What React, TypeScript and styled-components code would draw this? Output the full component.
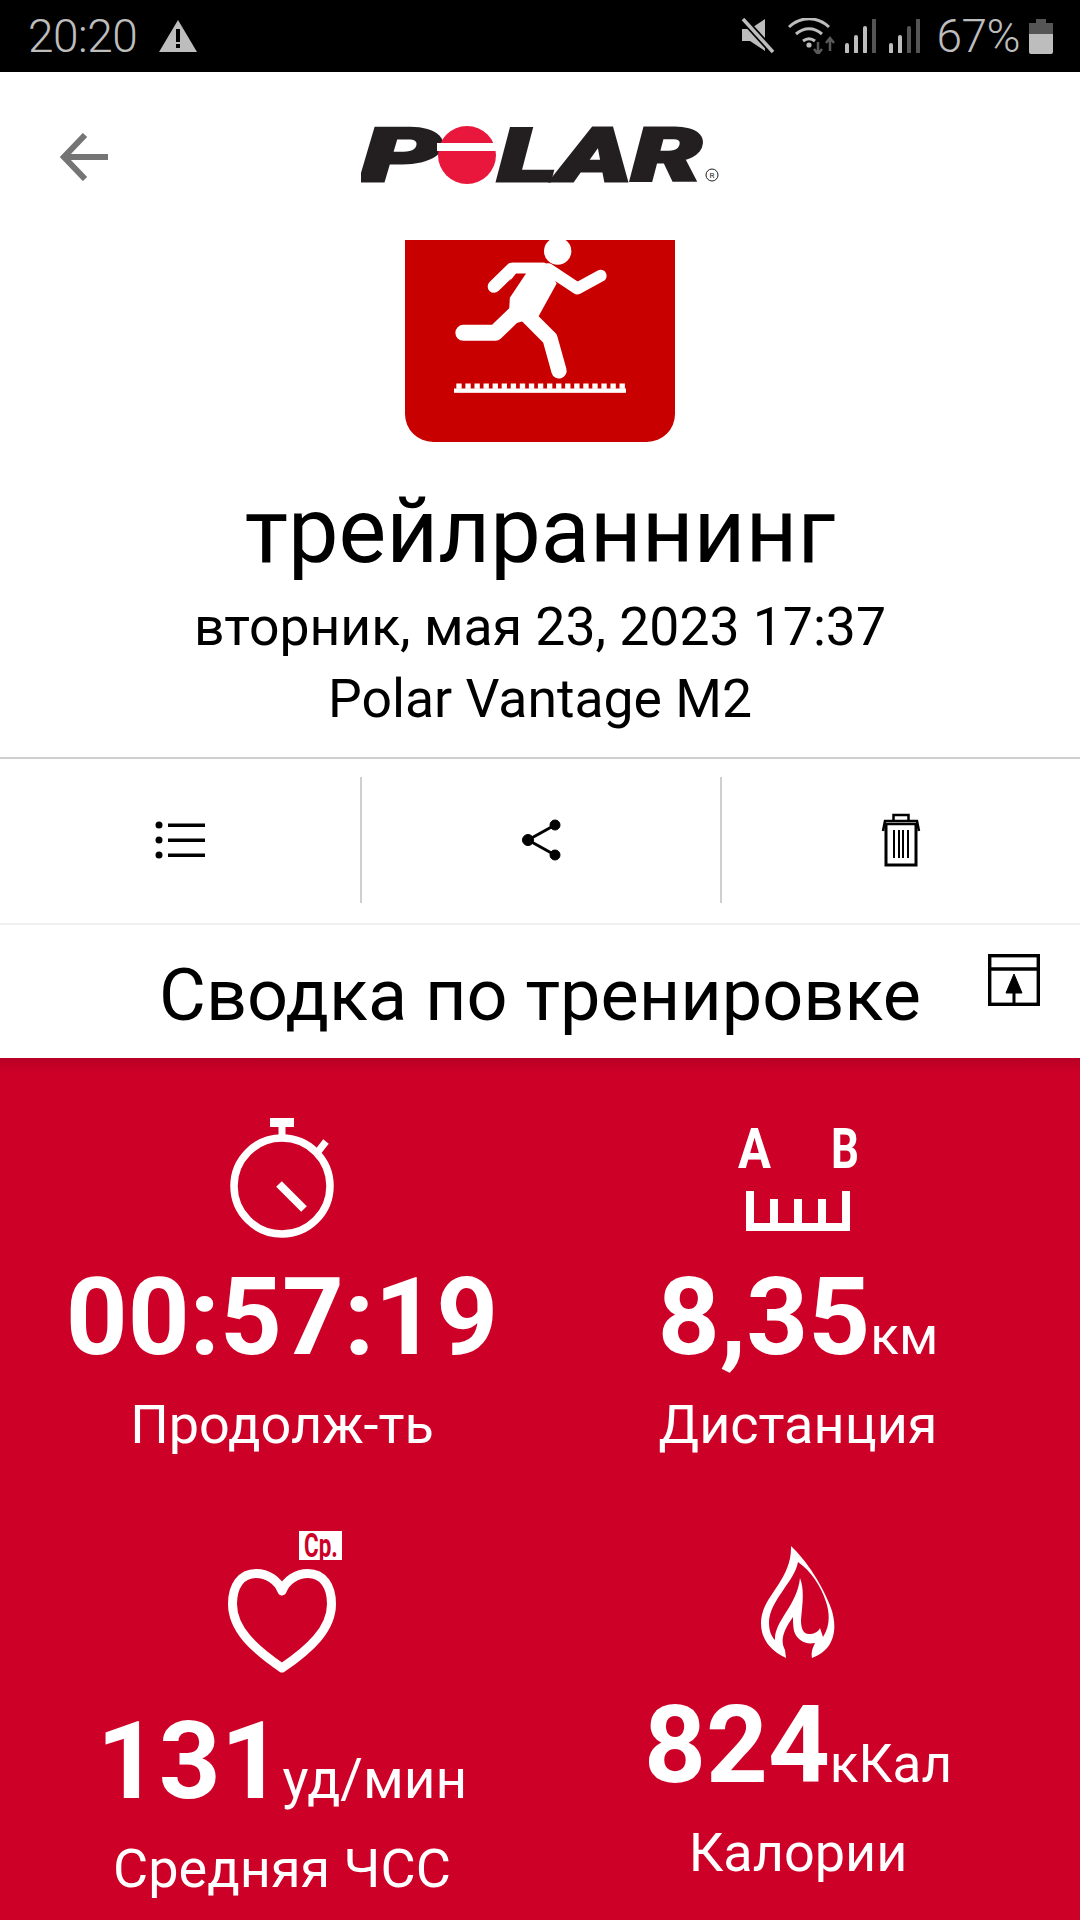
import React from 'react';
import styled, { createGlobalStyle } from 'styled-components';

const Global = createGlobalStyle`
  html, body { margin: 0; padding: 0; background: #fff; }
  body { font-family: Roboto, "Noto Sans", sans-serif; }
  * { box-sizing: border-box; }
  svg { display: block; flex: none; }
`;

const Page = styled.div`
  width: 1080px;
  height: 1920px;
  overflow: hidden;
  display: flex;
  flex-direction: column;
`;

const StatusBar = styled.div`
  height: 72px;
  background: #000;
  color: #bdbdbd;
  display: flex;
  align-items: center;
  padding: 0 27px 0 28px;
  font-weight: 300;
  font-size: 46px;
`;
const StatusTime = styled.span`
  margin-right: 22px;
  letter-spacing: -0.5px;
`;
const StatusRight = styled.div`
  margin-left: auto;
  display: flex;
  align-items: center;
`;
const StatusPercent = styled.span`
  margin: 0 9px 0 16px;
  letter-spacing: -0.5px;
`;

const Header = styled.div`
  height: 168px;
  display: flex;
  align-items: center;
  justify-content: center;
  position: relative;
`;
const BackButton = styled.div`
  position: absolute;
  left: 60px;
  top: 61px;
`;
const LogoWrap = styled.div`
  margin-left: 1px;
`;

const Badge = styled.div`
  width: 270px;
  height: 202px;
  margin: 0 auto;
  background: #c80000;
  border-radius: 0 0 28px 28px;
`;

const Hero = styled.div`
  text-align: center;
  color: #000;
`;
const SportName = styled.div`
  font-size: 90px;
  line-height: 106px;
  margin-top: 37px;
  margin-bottom: 6px;
`;
const MetaLine = styled.div`
  font-size: 53.5px;
  line-height: 72px;
`;

const ActionBar = styled.div`
  margin-top: 22px;
  height: 168px;
  border-top: 2px solid #cfcfcf;
  border-bottom: 2px solid #efefef;
  padding: 18px 0 20px;
  display: grid;
  grid-template-columns: 362px 360px 1fr;
`;
const ActionCell = styled.div<{ $divided?: boolean }>`
  display: flex;
  align-items: center;
  justify-content: center;
  border-right: ${(p) => (p.$divided ? '2px solid #cfcfcf' : 'none')};
`;

const SummaryBar = styled.div`
  height: 133px;
  position: relative;
  text-align: center;
  font-size: 72px;
  line-height: 125px;
  padding-top: 8px;
  color: #000;
`;
const SummaryIcon = styled.div`
  position: absolute;
  left: 988px;
  top: 29px;
`;

const RedPanel = styled.div`
  flex: 1;
  background: linear-gradient(#b70024 0, #cd0027 14px);
  display: grid;
  grid-template-columns: 564px 468px;
  grid-template-rows: 463px 1fr;
  color: #fff;
  text-align: center;
`;
const Stat = styled.div`
  display: flex;
  flex-direction: column;
  align-items: center;
`;
const IconSlot = styled.div<{ $top: number; $height: number }>`
  margin-top: ${(p) => p.$top}px;
  height: ${(p) => p.$height}px;
  display: flex;
  justify-content: center;
  position: relative;
`;
const AvgTag = styled.div`
  position: absolute;
  left: 71px;
  top: -38px;
  width: 43px;
  height: 29px;
  background: #fff;
  color: #cd0027;
  display: flex;
  align-items: center;
  justify-content: center;
`;
const AvgText = styled.span`
  font-size: 33px;
  font-weight: 700;
  line-height: 29px;
  display: block;
  transform: scaleX(0.68);
  white-space: nowrap;
`;
const Value = styled.div`
  font-size: 108px;
  font-weight: 700;
  line-height: 126px;
  height: 126px;
  white-space: nowrap;
`;
const Unit = styled.span<{ $size?: number }>`
  font-size: ${(p) => p.$size ?? 53}px;
  font-weight: 400;
  line-height: 1;
`;
const Label = styled.div`
  font-size: 54px;
  line-height: 60px;
  margin-top: 15px;
`;

const BackArrow = () => (
  <svg width="48" height="48" viewBox="0 0 48 48" fill="none" stroke="#757575" strokeWidth="6">
    <path d="M48 24H5" />
    <path d="M25 2L4 24l21 22" />
  </svg>
);

const PolarLogo = () => (
  <svg width="360" height="92" viewBox="0 0 360 92">
    <g fill="#231f20" stroke="#231f20" strokeWidth="3" fontFamily="Roboto, sans-serif" fontWeight="900" fontStyle="italic" fontSize="74">
      <text x="0" y="70.500" textLength="80" lengthAdjust="spacingAndGlyphs">P</text>
      <text x="137" y="70.500" textLength="204" lengthAdjust="spacingAndGlyphs">LAR</text>
    </g>
    <ellipse cx="106" cy="45" rx="29" ry="29" fill="#e8173b" />
    <rect x="76" y="33" width="60" height="8" fill="#fff" />
    <circle cx="351" cy="65" r="6" fill="none" stroke="#231f20" strokeWidth="1" />
    <text x="351" y="68" fontSize="8" textAnchor="middle" fill="#231f20" fontFamily="Roboto, sans-serif">R</text>
  </svg>
);

const RunnerBadge = () => (
  <svg width="270" height="202" viewBox="75 60 810 605">
    <g fill="#fff">
      <circle cx="533" cy="93" r="41" />
      <path d="M395 128h100l35 62-55 100-70 20-17-48z" />
      <rect x="222" y="505" width="516" height="13" />
      {Array.from({ length: 19 }, (_, i) => (
        <rect key={i} x={229 + i * 27.2} y="490" width="16" height="16" />
      ))}
    </g>
    <g fill="none" stroke="#fff" strokeLinecap="round" strokeLinejoin="round">
      <path d="M342 199l53-52h95" strokeWidth="38" />
      <path d="M505 147l87 58 70-38" strokeWidth="36" />
      <path d="M250 338h96l74-72" strokeWidth="48" />
      <path d="M440 285l70 70 27 97" strokeWidth="46" />
    </g>
    <path d="M438 160h-30l-20 25v50z" fill="#c80000" />
  </svg>
);

const ListIcon = () => (
  <svg width="50" height="38" viewBox="0 0 50 38" fill="#000">
    <circle cx="4" cy="4" r="3.500" />
    <circle cx="4" cy="19" r="3.500" />
    <circle cx="4" cy="34" r="3.500" />
    <rect x="13" y="2.500" width="37" height="3.500" />
    <rect x="13" y="17.500" width="37" height="3.500" />
    <rect x="13" y="32.500" width="37" height="3.500" />
  </svg>
);

const ShareIcon = () => (
  <svg width="40" height="42" viewBox="0 0 40 42" fill="#000" stroke="#000">
    <circle cx="7" cy="21" r="5.500" />
    <circle cx="34" cy="6" r="5" />
    <circle cx="34" cy="36" r="5" />
    <path d="M7 21L34 6M7 21l27 15" strokeWidth="3" fill="none" />
  </svg>
);

const TrashIcon = () => (
  <svg width="40" height="54" viewBox="0 0 40 54" fill="none" stroke="#000">
    <path d="M12.500 9V2h15v7" strokeWidth="2.500" />
    <path d="M2 18L4 8h32l2 10" strokeWidth="2.500" />
    <path d="M3 11h34" strokeWidth="2.500" />
    <path d="M5 12v40h30V12" strokeWidth="3" />
    <path d="M13 17v28M18 17v28M22 17v28M27 17v28" strokeWidth="2" />
  </svg>
);

const DocIcon = () => (
  <svg width="52" height="52" viewBox="0 0 52 52" fill="none" stroke="#000" strokeWidth="3.400">
    <rect x="1.700" y="1.700" width="48.600" height="48.600" />
    <path d="M2 15h48" />
    <path d="M26 50V38" strokeWidth="3" />
    <path d="M26 20l-8 19h16z" fill="#000" strokeWidth="1" />
  </svg>
);

const StopwatchIcon = () => (
  <svg width="104" height="120" viewBox="0 0 104 120" fill="none" stroke="#fff" strokeWidth="7.500">
    <circle cx="52" cy="68" r="48" />
    <path d="M40 4.500h24" strokeWidth="9" />
    <path d="M52 6v14" strokeWidth="7" />
    <path d="M87 35l9-11.500" strokeWidth="7" />
    <path d="M49 66l25 25" strokeWidth="8" />
  </svg>
);

const DistanceIcon = () => (
  <svg width="144" height="129" viewBox="-12 -24 144 129" fill="none" stroke="#fff" strokeWidth="8">
    <text x="0" y="41" fill="#fff" stroke="none" fontSize="56" fontWeight="700" fontFamily="Roboto, sans-serif" textLength="33" lengthAdjust="spacingAndGlyphs">A</text>
    <text x="93" y="41" fill="#fff" stroke="none" fontSize="56" fontWeight="700" fontFamily="Roboto, sans-serif" textLength="28" lengthAdjust="spacingAndGlyphs">B</text>
    <path d="M12 64v36h96V64" />
    <path d="M36 72v28M60 72v28M84 72v28" />
  </svg>
);

const HeartIcon = () => (
  <svg width="108" height="104" viewBox="0 0 108 104" fill="none" stroke="#fff" strokeWidth="9" strokeLinejoin="round">
    <path d="M54 22C50 11 39 4.500 28 4.500 13 4.500 4.500 17 4.500 35c0 25 21.500 45 49.500 64 28-19 49.500-39 49.500-64 0-18-8.500-30.500-23.500-30.500-11 0-22 6.500-26 17.500z" />
  </svg>
);

const FlameIcon = () => (
  <svg width="74" height="112" viewBox="0 0 74 112" fill="#fff">
    <path
      fillRule="evenodd"
      d="M30 0C46 15 62 40 70 62C77 82 74 104 51 112C50 107 51 103 54 97C44 99 36 94 33 85C32 80 32 75 32 71C22 85 19 95 24 104L25 112C8 104 0 92 0 77C0 50 31 35 30 0zM37 16C34 35 8 55 8 77C8 84 10 90 14 94C13 75 36 60 39 32C44 45 41 60 40 74C40 82 42 88 48 88C53 88 57 86 59 82L62 91C69 80 69 68 65 56C60 40 50 25 37 16z"
    />
  </svg>
);

const MuteIcon = () => (
  <svg width="34" height="36" viewBox="0 0 34 36" fill="#bdbdbd">
    <path d="M1 11h8l15-10v32L9 23H1z" />
    <path d="M2 1l30 33" stroke="#000" strokeWidth="7" />
    <path d="M2 1l30 33" stroke="#bdbdbd" strokeWidth="3.500" />
  </svg>
);

const WifiIcon = () => (
  <svg width="48" height="36" viewBox="0 0 48 36" fill="none" stroke="#bdbdbd" strokeWidth="3">
    <path d="M2 9c12-11 28-11 40 0" />
    <path d="M9 16c8-7 18-7 26 0" />
    <path d="M16 23c4-3 8-3 12 0" />
    <circle cx="22" cy="27" r="2.600" fill="#bdbdbd" stroke="none" />
    <path d="M31 36V24M27 31l4 5 4-5M43 33V20M39 25l4-5 4 5" stroke="#5a5a5a" strokeWidth="2.500" />
  </svg>
);

const SignalIcon = ({ lit }: { lit: number }) => (
  <svg width="31" height="34" viewBox="0 0 31 34" fill="none" strokeWidth="4">
    {[26, 18, 9, 1].map((top, i) => (
      <path key={i} d={`M${2 + i * 9} 33V${top}`} stroke={i < lit ? '#bdbdbd' : '#555'} strokeLinecap="round" />
    ))}
  </svg>
);

const BatteryIcon = () => (
  <svg width="24" height="36" viewBox="0 0 24 36">
    <path d="M7 1h10v4h7v13H0V5h7z" fill="#555" />
    <path d="M0 16h24v18a2 2 0 0 1-2 2H2a2 2 0 0 1-2-2z" fill="#bdbdbd" />
  </svg>
);

const WarnIcon = () => (
  <svg width="38" height="32" viewBox="0 0 38 32">
    <path d="M19 0l19 32H0z" fill="#bdbdbd" />
    <rect x="17" y="9" width="4" height="13" fill="#000" />
    <rect x="17" y="24" width="4" height="4" fill="#000" />
  </svg>
);

const Gap = styled.span<{ $w: number }>`
  width: ${(p) => p.$w}px;
`;

export default function App() {
  return (
    <Page>
      <Global />
      <StatusBar>
        <StatusTime>20:20</StatusTime>
        <WarnIcon />
        <StatusRight>
          <MuteIcon />
          <Gap $w={12} />
          <WifiIcon />
          <Gap $w={10} />
          <SignalIcon lit={3} />
          <Gap $w={13} />
          <SignalIcon lit={2} />
          <StatusPercent>67%</StatusPercent>
          <BatteryIcon />
        </StatusRight>
      </StatusBar>
      <Header>
        <BackButton><BackArrow /></BackButton>
        <LogoWrap><PolarLogo /></LogoWrap>
      </Header>
      <Badge><RunnerBadge /></Badge>
      <Hero>
        <SportName>трейлраннинг</SportName>
        <MetaLine>вторник, мая 23, 2023 17:37</MetaLine>
        <MetaLine>Polar Vantage M2</MetaLine>
      </Hero>
      <ActionBar>
        <ActionCell $divided><ListIcon /></ActionCell>
        <ActionCell $divided><ShareIcon /></ActionCell>
        <ActionCell><TrashIcon /></ActionCell>
      </ActionBar>
      <SummaryBar>
        Сводка по тренировке
        <SummaryIcon><DocIcon /></SummaryIcon>
      </SummaryBar>
      <RedPanel>
        <Stat>
          <IconSlot $top={60} $height={136}><StopwatchIcon /></IconSlot>
          <Value>00:57:19</Value>
          <Label>Продолж-ть</Label>
        </Stat>
        <Stat>
          <IconSlot $top={45} $height={151}><DistanceIcon /></IconSlot>
          <Value>8,35<Unit>км</Unit></Value>
          <Label>Дистанция</Label>
        </Stat>
        <Stat>
          <IconSlot $top={48} $height={129}>
            <HeartIcon />
            <AvgTag><AvgText>Ср.</AvgText></AvgTag>
          </IconSlot>
          <Value>131<Unit $size={55}>уд/мин</Unit></Value>
          <Label>Средняя ЧСС</Label>
        </Stat>
        <Stat>
          <IconSlot $top={25} $height={136}><FlameIcon /></IconSlot>
          <Value>824<Unit>кКал</Unit></Value>
          <Label>Калории</Label>
        </Stat>
      </RedPanel>
    </Page>
  );
}
